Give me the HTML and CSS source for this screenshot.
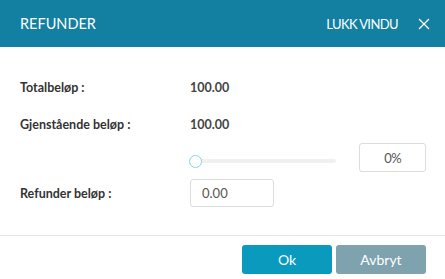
FILE: index.html
```html
<!DOCTYPE html>
<html lang="nb">
<head>
  <meta charset="UTF-8" />
  <meta name="viewport" content="width=device-width, initial-scale=1.0"/>
  <title>Refunder</title>
  <link rel="stylesheet" href="styles.css">
</head>
<body>
  <div class="modal">
    <!-- Header -->
    <header class="modal-header">
      <div class="modal-title">REFUNDER</div>
      <div class="modal-close">
        <span>LUKK VINDU</span>
        <svg width="12" height="12" viewBox="0 0 12 12" aria-hidden="true">
          <path d="M1 1 L11 11 M11 1 L1 11" stroke="#fff" stroke-width="1.4" fill="none"/>
        </svg>
      </div>
    </header>

    <!-- Form -->
    <div class="modal-body">
      <div class="row row-total">
        <div class="label">Totalbeløp :</div>
        <div class="value">100.00</div>
      </div>
      <div class="row row-rest">
        <div class="label">Gjenstående beløp :</div>
        <div class="value">100.00</div>
      </div>
      <div class="row row-slider">
        <div class="label"></div>
        <div class="slider">
          <div class="slider-track"></div>
          <span class="slider-thumb"></span>
        </div>
        <div class="field field-percent">0%</div>
      </div>
      <div class="row row-amount">
        <div class="label">Refunder beløp :</div>
        <div class="field field-amount">0.00</div>
      </div>
    </div>

    <!-- Footer -->
    <footer class="modal-footer">
      <button class="btn btn-ok">Ok</button>
      <button class="btn btn-cancel">Avbryt</button>
    </footer>
  </div>
</body>
</html>
```

FILE: styles.css
```css
/* ---------- Reset ---------- */
* {
  box-sizing: border-box;
  margin: 0;
  padding: 0;
}
html, body {
  background: #ffffff;
  font-family: Lato, "Open Sans", sans-serif;
  color: #333;
}

.modal {
  width: 445px;
  height: 279px;
  background: #fff;
}

/* ---------- Header ---------- */
.modal-header {
  height: 47px;
  background-color: #137fa1;
  color: #fff;
  display: flex;
  align-items: center;
  justify-content: space-between;
  padding: 0 15px 0 20px;
}
.modal-title {
  font-size: 14.5px;
}
.modal-close {
  display: flex;
  align-items: center;
  gap: 20px;
  font-size: 13px;
  letter-spacing: -0.6px;
}
.modal-close svg {
  display: block;
}

/* ---------- Body ---------- */
.modal-body {
  padding: 28px 19px 0 20px;
  height: 189px;
  border-bottom: 1px solid #e6e6e6;
}
.row {
  display: flex;
  align-items: center;
}
.label {
  width: 170px;
  flex: none;
  font-size: 12.5px;
  font-weight: 700;
  color: #333;
}
.value {
  font-size: 12.5px;
  font-weight: 700;
  color: #444;
}
.row-total {
  height: 25px;
}
.row-rest {
  height: 25px;
  margin-top: 12px;
}
.row-slider {
  height: 29px;
  margin-top: 6px;
}
.row-amount {
  height: 28px;
  margin-top: 7px;
}

/* ---------- Slider ---------- */
.slider {
  position: relative;
  width: 147px;
  height: 13px;
  margin-top: 7px;
  margin-right: 23px;
}
.slider-track {
  position: absolute;
  left: 6px;
  right: 0;
  top: 4px;
  height: 4px;
  background: #f0f0f0;
  border-radius: 2px;
}
.slider-thumb {
  position: absolute;
  left: -1px;
  top: 0;
  width: 13px;
  height: 13px;
  border-radius: 50%;
  border: 1.5px solid #7fd5e6;
  background: #fff;
}

/* ---------- Fields ---------- */
.field {
  border: 1px solid #dcdcdc;
  border-radius: 3px;
  font-size: 13px;
  color: #555;
  display: flex;
  align-items: center;
}
.field-percent {
  width: 67px;
  height: 29px;
  justify-content: center;
  letter-spacing: -0.5px;
}
.field-amount {
  width: 84px;
  height: 28px;
  padding-left: 11px;
}

/* ---------- Footer ---------- */
.modal-footer {
  display: flex;
  justify-content: flex-end;
  gap: 4px;
  padding: 9px 19px 0 0;
}
.btn {
  width: 90px;
  height: 29px;
  border: none;
  border-radius: 3px;
  color: #fff;
  font-family: Lato, "Open Sans", sans-serif;
  font-size: 14px;
}
.btn-ok {
  background: #0a9abd;
}
.btn-cancel {
  background: #7fa2af;
}
```
